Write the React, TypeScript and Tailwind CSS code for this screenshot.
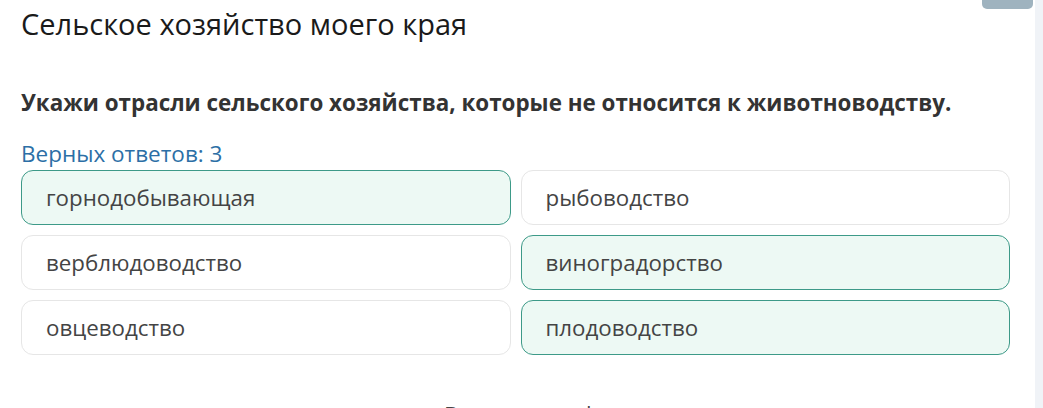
const options = [
  { text: 'горнодобывающая', selected: true },
  { text: 'рыбоводство', selected: false },
  { text: 'верблюдоводство', selected: false },
  { text: 'виноградорство', selected: true },
  { text: 'овцеводство', selected: false },
  { text: 'плодоводство', selected: true },
]

export default function App() {
  return (
    <div
      className="relative flex h-[408px] w-[1043px] overflow-hidden bg-white"
      style={{ fontFamily: '"Open Sans", "Noto Sans", sans-serif' }}
    >
      {/* cut-off button at the top right */}
      <div className="absolute top-0 right-[10px] h-[9px] w-[51px] rounded-b-[5px] bg-[#9fb3bf]" />

      <main className="flex-1 pl-[21px] pr-[25px]">
        <h1 className="mt-[6px] text-[29px] leading-[36px] text-[#1a1a1a]">
          Сельское хозяйство моего края
        </h1>

        <p className="mt-[46px] text-[22.4px] leading-[30px] font-bold text-[#333]">
          Укажи отрасли сельского хозяйства, которые не относится к животноводству.
        </p>

        <p className="mt-[21px] text-[22.5px] leading-[30px] text-[#2c6fa6]">Верных ответов: 3</p>

        <div className="mt-[1px] grid grid-cols-2 gap-[10px]">
          {options.map((o) => (
            <div
              key={o.text}
              className={`flex h-[55px] items-center rounded-[12px] border px-[24px] text-[22.3px] text-[#444] ${
                o.selected ? 'border-[#3d9a88] bg-[#edf9f4]' : 'border-[#e6e6e6] bg-white'
              }`}
            >
              {o.text}
            </div>
          ))}
        </div>

        <div className="mt-[45px] pl-[423px] text-[22.5px] leading-[30px] text-[#444]">
          Вернуться к формулировке
        </div>
      </main>

      {/* scrollbar track */}
      <div className="w-[8px] bg-[#f0f3f7]" />
    </div>
  )
}
